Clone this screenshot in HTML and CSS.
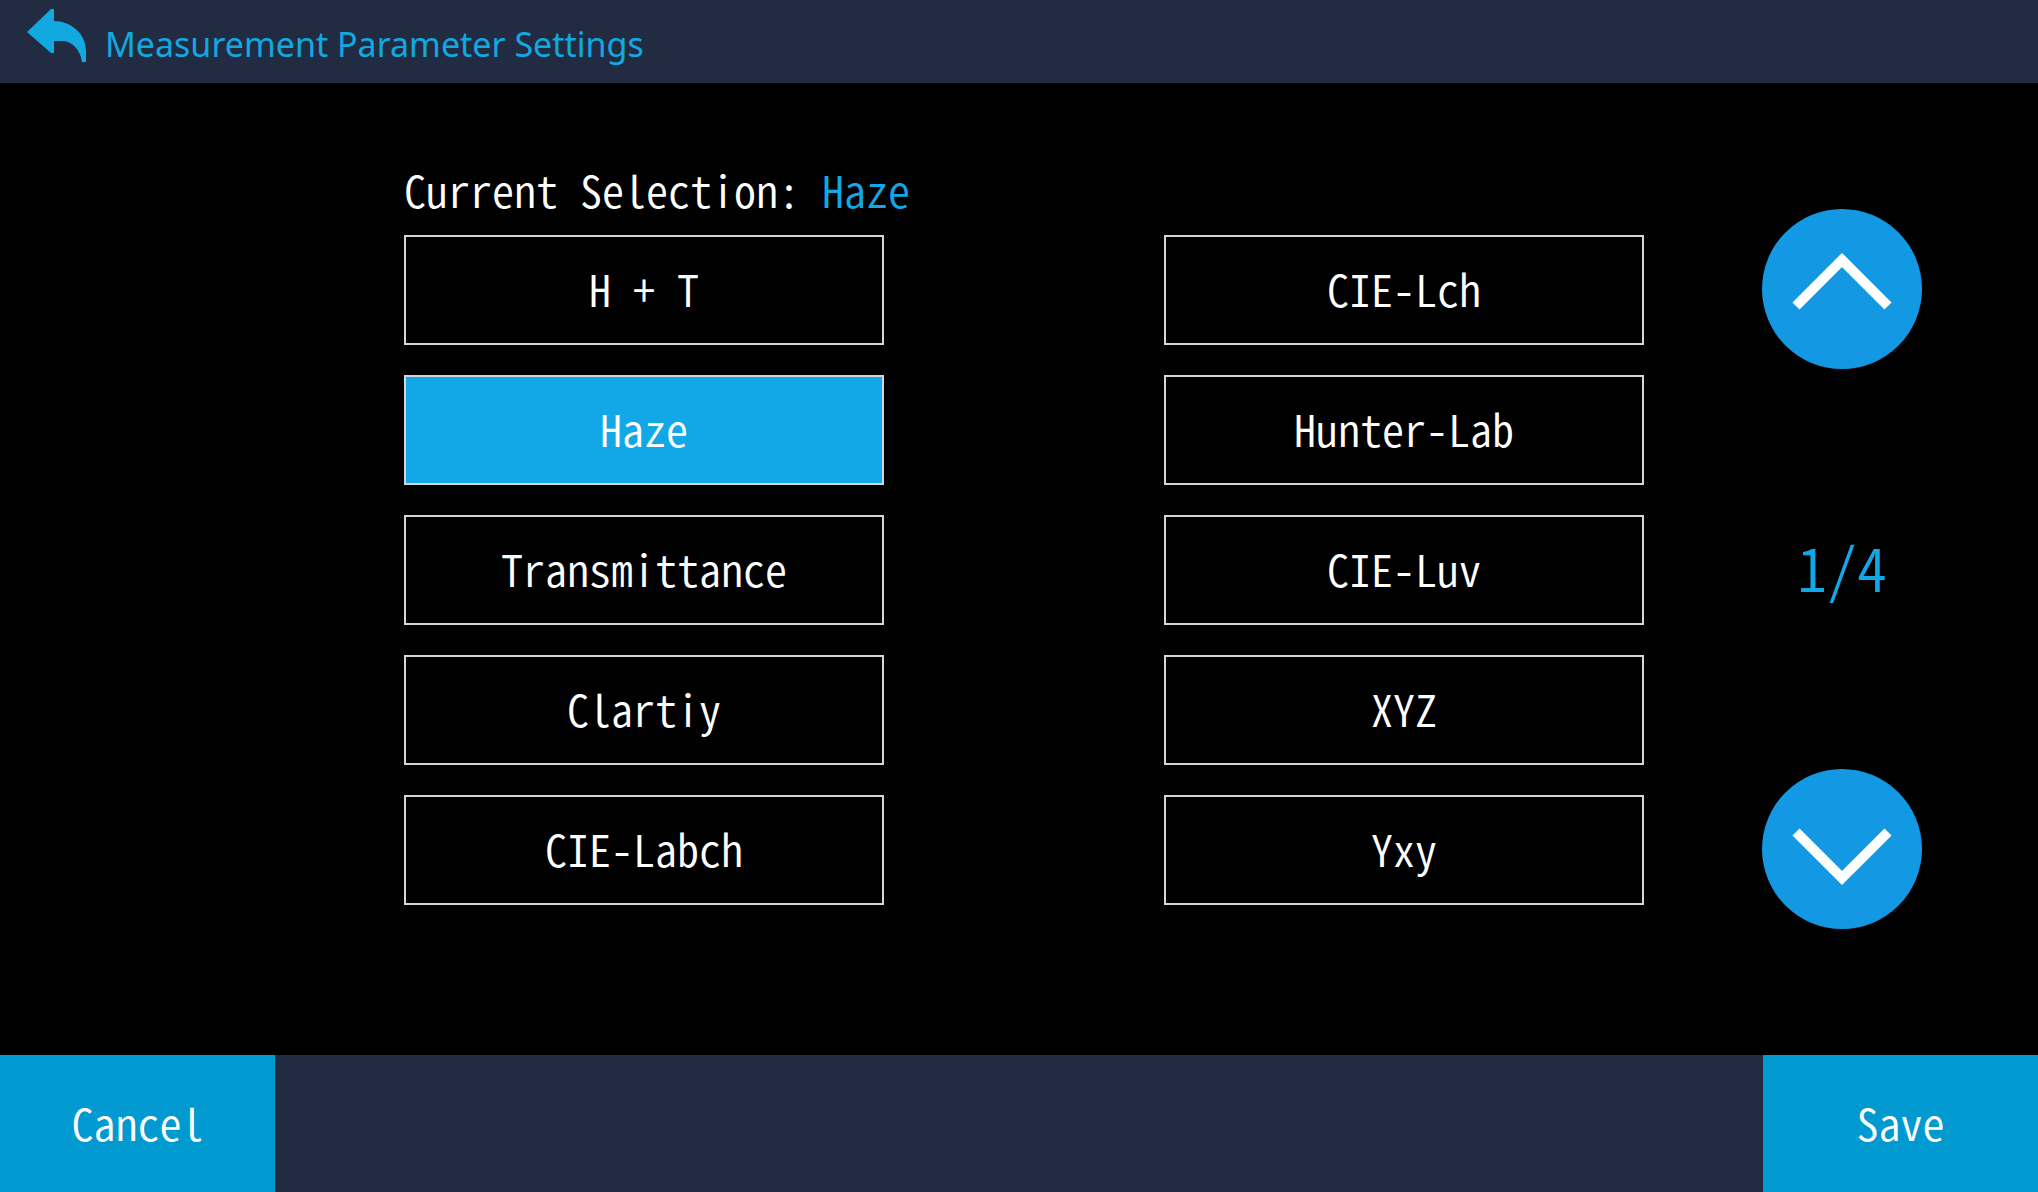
FILE: index.html
```html
<!DOCTYPE html>
<html lang="en">
<head>
  <meta charset="utf-8">
  <meta name="viewport" content="width=device-width, initial-scale=1">
  <title>Measurement Parameter Settings</title>
  <link rel="stylesheet" href="styles.css">
</head>
<body>
  <header class="topbar">
    <button class="back" type="button" aria-label="Back">
      <svg class="back-icon" viewBox="0 0 59 54" aria-hidden="true"><path d="M0 23 L24 0 H27 V12 C43 12 59 24 59 42 V53 H55 C53 40 45 32 35 32 H27 V44 H24 Z"/></svg>
    </button>
    <h1 class="title">Measurement Parameter Settings</h1>
  </header>
  <main class="content">
    <section class="picker">
      <p class="current">Current Selection: <span class="current-value">Haze</span></p>
      <div class="options">
        <button class="option" type="button">H + T</button>
        <button class="option selected" type="button" aria-pressed="true">Haze</button>
        <button class="option" type="button">Transmittance</button>
        <button class="option" type="button">Clartiy</button>
        <button class="option" type="button">CIE-Labch</button>
        <button class="option" type="button">CIE-Lch</button>
        <button class="option" type="button">Hunter-Lab</button>
        <button class="option" type="button">CIE-Luv</button>
        <button class="option" type="button">XYZ</button>
        <button class="option" type="button">Yxy</button>
      </div>
    </section>
    <nav class="pager" aria-label="Pages">
      <button class="page-button" type="button" aria-label="Previous page">
        <svg class="chevron" viewBox="0 0 160 160" aria-hidden="true"><path d="M34 97 L80 51 L126 97"/></svg>
      </button>
      <span class="page-count">1/4</span>
      <button class="page-button" type="button" aria-label="Next page">
        <svg class="chevron" viewBox="0 0 160 160" aria-hidden="true"><path d="M34 63 L80 109 L126 63"/></svg>
      </button>
    </nav>
  </main>
  <footer class="actions">
    <button class="action" type="button">Cancel</button>
    <button class="action" type="button">Save</button>
  </footer>
</body>
</html>
```

FILE: styles.css
```css
* {
  box-sizing: border-box;
}

body {
  margin: 0;
  min-height: 100vh;
  display: flex;
  flex-direction: column;
  background: #000;
  color: #fff;
  font-family: "Noto Sans CJK JP", "Liberation Mono", monospace;
  font-feature-settings: "hwid";
  font-size: 44px;
  font-weight: 350;
  line-height: 60px;
}

button {
  margin: 0;
  padding: 0 0 4px;
  border: 0;
  color: inherit;
  font: inherit;
  font-feature-settings: inherit;
  cursor: pointer;
}

.topbar {
  display: flex;
  align-items: flex-start;
  gap: 19px;
  height: 83px;
  padding: 9px 27px;
  background: #212b42;
  color: #12a8e0;
}

.back {
  padding: 0;
  background: none;
}

.back-icon {
  display: block;
  width: 59px;
  height: 54px;
  fill: currentColor;
}

.title {
  margin: 10px 0 0;
  font-family: "Noto Sans", sans-serif;
  font-feature-settings: normal;
  font-size: 34px;
  font-weight: 400;
  line-height: 50px;
}

.content {
  flex: 1;
  display: grid;
  grid-template-columns: 404fr 1240fr 118fr 160px 116fr;
  align-items: start;
  padding: 76px 0;
}

.picker {
  grid-column: 2;
}

.current {
  margin: 0 0 16px;
}

.current-value {
  color: #12a8e8;
}

.options {
  display: grid;
  grid-template-columns: 480fr 480fr;
  grid-template-rows: repeat(5, 110px);
  grid-auto-flow: column;
  column-gap: 22.58%;
  row-gap: 30px;
}

.option {
  border: 2px solid #d3d6d8;
  background: #000;
}

.selected {
  background: #12a8e8;
}

.pager {
  grid-column: 4;
  display: flex;
  flex-direction: column;
  align-items: center;
  justify-content: space-between;
  height: 720px;
  margin-top: 50px;
}

.page-button {
  width: 160px;
  height: 160px;
  padding: 0;
  border-radius: 50%;
  background: #1398e4;
}

.chevron {
  display: block;
  width: 100%;
  fill: none;
  stroke: #fff;
  stroke-width: 10;
}

.page-count {
  padding-bottom: 6px;
  color: #12a8e8;
  font-size: 60px;
}

.actions {
  display: flex;
  justify-content: space-between;
  height: 137px;
  background: #212b42;
}

.action {
  width: 275px;
  background: #009ad1;
}
```
